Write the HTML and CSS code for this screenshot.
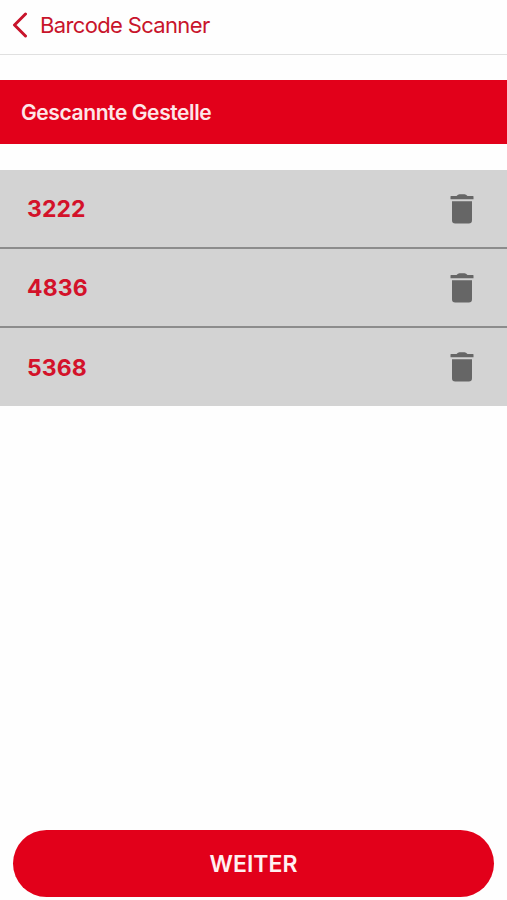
FILE: index.html
```
<!DOCTYPE html>
<html lang="de">
<head>
  <meta charset="UTF-8">
  <meta name="viewport" content="width=device-width, initial-scale=1.0">
  <title>Barcode Scanner</title>
  <link rel="stylesheet" href="styles.css">
</head>
<body>
  <div class="app">
    <header class="nav">
      <a class="back" href="#">
        <svg class="chevron" viewBox="0 0 16 26" width="16" height="26">
          <path d="M13.5 2 L2.5 13 L13.5 24"/>
        </svg>
        <span class="back-label">Barcode Scanner</span>
      </a>
    </header>

    <h1 class="title">Gescannte Gestelle</h1>

    <ul class="list">
      <li class="row">
        <span class="number">3222</span>
        <button class="delete" aria-label="Löschen">
          <svg viewBox="0 0 24 30" width="24" height="30">
            <path d="M1 2 H6.5 Q8 0.3 9.5 0.3 H14.5 Q16 0.3 17.5 2 H23 Q23.5 2 23.5 2.5 V5.3 H0.5 V2.5 Q0.5 2 1 2 Z M2 7.3 H22 V26.3 Q22 29.5 18.8 29.5 H5.2 Q2 29.5 2 26.3 Z"/>
          </svg>
        </button>
      </li>
      <li class="row">
        <span class="number">4836</span>
        <button class="delete" aria-label="Löschen">
          <svg viewBox="0 0 24 30" width="24" height="30">
            <path d="M1 2 H6.5 Q8 0.3 9.5 0.3 H14.5 Q16 0.3 17.5 2 H23 Q23.5 2 23.5 2.5 V5.3 H0.5 V2.5 Q0.5 2 1 2 Z M2 7.3 H22 V26.3 Q22 29.5 18.8 29.5 H5.2 Q2 29.5 2 26.3 Z"/>
          </svg>
        </button>
      </li>
      <li class="row">
        <span class="number">5368</span>
        <button class="delete" aria-label="Löschen">
          <svg viewBox="0 0 24 30" width="24" height="30">
            <path d="M1 2 H6.5 Q8 0.3 9.5 0.3 H14.5 Q16 0.3 17.5 2 H23 Q23.5 2 23.5 2.5 V5.3 H0.5 V2.5 Q0.5 2 1 2 Z M2 7.3 H22 V26.3 Q22 29.5 18.8 29.5 H5.2 Q2 29.5 2 26.3 Z"/>
          </svg>
        </button>
      </li>
    </ul>

    <button class="next">WEITER</button>
  </div>
</body>
</html>
```
FILE: styles.css
```
* {
  box-sizing: border-box;
}

body {
  margin: 0;
  background-color: #fefefe;
  font-family: Inter, "Liberation Sans", sans-serif;
}

.app {
  display: flex;
  flex-direction: column;
  height: 100vh;
}

.nav {
  display: flex;
  align-items: center;
  height: 55px;
  padding: 0 12px 4px;
  border-bottom: 1px solid #e0e0e0;
}

.back {
  display: flex;
  align-items: center;
  gap: 12px;
  color: #c8142b;
  text-decoration: none;
}

.chevron {
  fill: none;
  stroke: #c8142b;
  stroke-width: 3;
  stroke-linecap: round;
  stroke-linejoin: round;
}

.back-label {
  font-size: 22px;
  letter-spacing: -0.65px;
}

.title {
  display: flex;
  align-items: center;
  height: 64px;
  margin: 25px 0 26px;
  padding-left: 21px;
  background-color: #e2001a;
  color: #fde6e8;
  font-size: 21px;
  font-weight: 600;
  letter-spacing: -0.4px;
}

.list {
  margin: 0;
  padding: 0;
  list-style: none;
}

.row {
  display: flex;
  align-items: center;
  justify-content: space-between;
  height: 79px;
  padding: 0 33px 0 27px;
  background-color: #d3d3d3;
  border-bottom: 2px solid #8c8c8c;
}

.row:last-child {
  height: 78px;
  border-bottom: none;
}

.number {
  padding-top: 1px;
  color: #d3122a;
  font-size: 23px;
  font-weight: 700;
  letter-spacing: 0.1px;
}

.delete {
  display: flex;
  padding: 0;
  border: none;
  background: none;
  fill: #666;
}

.next {
  height: 67px;
  margin: auto 13px 3px;
  border: none;
  border-radius: 34px;
  background-color: #e2001a;
  color: #fff0f1;
  font-family: inherit;
  font-size: 23px;
  font-weight: 600;
}
```
